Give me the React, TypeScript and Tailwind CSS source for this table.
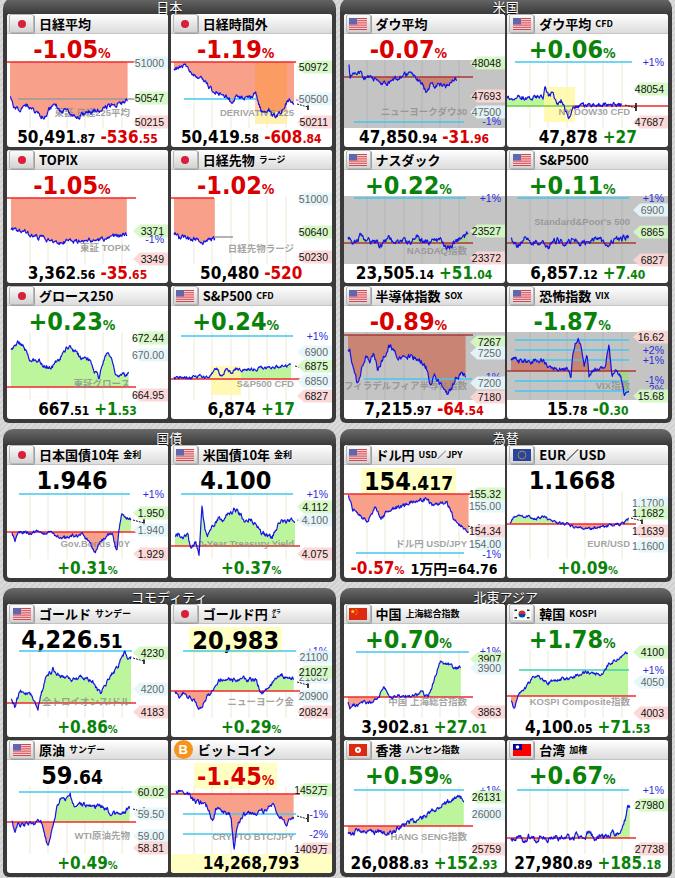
import React from 'react';

const NUM = "font-['DejaVu_Sans_Condensed','DejaVu_Sans','Noto_Sans_CJK_JP',sans-serif] font-bold";
const JP = "font-['Noto_Sans_CJK_JP',sans-serif]";
const LBL = "font-['Liberation_Sans','Noto_Sans_CJK_JP',sans-serif]";

type Lbl = [number, string, 'h' | 'l' | 'g' | 'p' | 'b'];
type HLine = [number, number, number, string];
type Rect = [number, number, number, number, string];

interface ChartDef {
  a: number[][];
  seed: number;
  amp?: number;
  base: number;
  bx?: [number, number];
  lines?: HLine[];
  rects?: Rect[];
  labels: Lbl[];
  wm?: string;
  wy?: number;
  closed?: boolean;
  inv?: boolean;
  tick?: [number, number];
}

interface CardData {
  f: string;
  t: string;
  s?: string;
  top: React.ReactNode;
  bot: React.ReactNode;
  yb?: boolean;
  c: ChartDef;
}

const CYAN = '#40c8f0';
const GREEN = 'text-[#0a820a]';
const LB = { h: '#d4f7c2', l: '#fcd6d6', g: '#e4f6fb', b: '#d4f7c2', p: 'none' };
const LT = { h: '#111', l: '#111', g: '#666', b: '#111', p: '#2b2bdc' };

// deterministic noisy series through anchor points
function gen(a: number[][], seed: number, amp: number) {
  let s = seed * 7919 + 13;
  const rnd = () => {
    s = (s * 9301 + 49297) % 233280;
    return s / 233280;
  };
  const out: number[][] = [];
  let w = 0;
  let j = 0;
  const x1 = a[a.length - 1][0];
  for (let x = a[0][0]; x <= x1 + 0.001; x += 0.6) {
    while (j < a.length - 2 && x > a[j + 1][0]) j++;
    const [ax, ay] = a[j];
    const [bx, by] = a[j + 1];
    const t = Math.min(1, Math.max(0, (x - ax) / (bx - ax || 1)));
    w = w * 0.55 + (rnd() - 0.5) * amp;
    out.push([x, Math.min(67, Math.max(1, ay + (by - ay) * t + w))]);
  }
  return out;
}

function Chart({ c, id }: { c: ChartDef; id: string }) {
  const pts = gen(c.a, c.seed, c.amp ?? 4);
  const line = pts.map((p, i) => `${i ? 'L' : 'M'}${p[0].toFixed(1)},${p[1].toFixed(1)}`).join('');
  const x0 = pts[0][0];
  const xl = pts[pts.length - 1][0];
  const area = `M${x0},${c.base}` + pts.map((p) => `L${p[0].toFixed(1)},${p[1].toFixed(1)}`).join('') + `L${xl},${c.base}Z`;
  const red = c.closed ? '#c98474' : '#f8a08a';
  const green = c.closed ? '#a9d48c' : '#bdf59c';
  const up = c.inv ? red : green;
  const down = c.inv ? green : red;
  const [b1, b2] = c.bx ?? [0, 129];
  return (
    <svg width={161} height={68} className="block shrink-0 overflow-visible">
      <defs>
        <clipPath id={`${id}u`}>
          <rect x={0} y={0} width={161} height={c.base} />
        </clipPath>
        <clipPath id={`${id}d`}>
          <rect x={0} y={c.base} width={161} height={68 - c.base} />
        </clipPath>
      </defs>
      {c.closed && <rect x={0} y={0} width={161} height={68} fill="#c4c4c4" />}
      {[23, 41, 60, 78, 96, 115].map((x) => (
        <line key={x} x1={x} x2={x} y1={0} y2={68} stroke={c.closed ? '#b4b4b4' : '#ece9d6'} strokeWidth={1} />
      ))}
      <path d={area} fill={up} clipPath={`url(#${id}u)`} />
      <path d={area} fill={down} clipPath={`url(#${id}d)`} />
      {c.rects?.map(([x, y, w, h, col], i) => (
        <rect key={i} x={x} y={y} width={w} height={h} fill={col} />
      ))}
      {c.lines?.map(([y, a, b, col], i) => (
        <line key={i} x1={a} x2={b} y1={y} y2={y} stroke={col} strokeWidth={1.3} />
      ))}
      <line x1={b1} x2={b2} y1={c.base} y2={c.base} stroke={c.closed ? '#a83838' : '#f02a2a'} strokeWidth={1.3} />
      {c.wm && (
        <text x={123} y={c.wy ?? 55} textAnchor="end" fill="#8c8c8c" fillOpacity={0.8} className={`${LBL} text-[9.5px] font-bold`}>
          {c.wm}
        </text>
      )}
      <path d={line} fill="none" stroke="#1414e6" strokeWidth={1.2} strokeLinejoin="round" />
      {c.tick && (
        <g stroke="#111">
          <path d={`M${c.tick[0]},${c.tick[1]} L${c.tick[0] + 11},${c.tick[1] + 3}`} strokeWidth={1} strokeDasharray="2 1" />
          <path d={`M${c.tick[0] + 11},${c.tick[1] - 2} V${c.tick[1] + 6}`} strokeWidth={1.6} />
        </g>
      )}
      {c.labels.map(([y, t, k], i) => (
        <g key={i}>
          {k !== 'p' && (
            <polygon
              points={`126,${y} 133,${y - 6.5} 161,${y - 6.5} 161,${y + 6.5} 133,${y + 6.5}`}
              fill={LB[k]}
              fillOpacity={0.92}
            />
          )}
          <text x={157} y={y + 3.7} textAnchor="end" fill={LT[k]} className={`${LBL} text-[10.5px]`}>
            {t}
          </text>
        </g>
      ))}
    </svg>
  );
}

const col = (v: string) => (v.startsWith('-') ? 'text-[#d80000]' : GREEN);

function Pct({ v, big, bg, cc }: { v: string; big?: boolean; bg?: boolean; cc?: string }) {
  return (
    <span className={`${NUM} ${cc ?? col(v)} leading-none whitespace-nowrap ${bg ? 'bg-[#ffffc4] px-[3px] pt-[1px]' : ''}`}>
      <span className={big ? 'text-[25px]' : 'text-[17px]'}>{v}</span>
      <span className={big ? 'text-[14px]' : 'text-[11px]'}>%</span>
    </span>
  );
}

function Val({ i, d, bg }: { i: string; d?: string; bg?: boolean }) {
  return (
    <span className={`${NUM} leading-none text-black whitespace-nowrap ${bg ? 'bg-[#ffffc4] px-[3px] pt-[1px]' : ''}`}>
      <span className="text-[25px]">{i}</span>
      {d && <span className="text-[19px]">{d}</span>}
    </span>
  );
}

function Bot({ i, d, c, cd, cc }: { i: string; d?: string; c: string; cd?: string; cc?: string }) {
  return (
    <span className={`${NUM} leading-none text-black whitespace-nowrap`}>
      <span className="text-[17px]">{i}</span>
      {d && <span className="text-[12px]">{d}</span>}
      <span className={`ml-[5px] ${cc ?? col(c)}`}>
        <span className="text-[17px]">{c}</span>
        {cd && <span className="text-[12px]">{cd}</span>}
      </span>
    </span>
  );
}

function star(cx: number, cy: number, r: number) {
  const p: string[] = [];
  for (let k = 0; k < 10; k++) {
    const rr = k % 2 ? r * 0.42 : r;
    const an = -Math.PI / 2 + (k * Math.PI) / 5;
    p.push(`${(cx + rr * Math.cos(an)).toFixed(2)},${(cy + rr * Math.sin(an)).toFixed(2)}`);
  }
  return p.join(' ');
}

function Flag({ f }: { f: string }) {
  if (f === 'btc')
    return (
      <div className="ml-[3px] flex h-[19px] w-[19px] shrink-0 items-center justify-center rounded-full bg-[#f7931a] font-['Liberation_Sans',sans-serif] text-[13px] font-bold leading-none text-white">
        B
      </div>
    );
  return (
    <div className="ml-[2px] flex h-[19px] w-[25px] shrink-0 items-center justify-center rounded-[2px] border border-[#b8b8b8] bg-linear-to-b from-[#fbfbfb] to-[#d2d2d2] shadow-[1px_1px_0_#a0a0a0]">
      <svg width={18} height={12} viewBox="0 0 18 12">
        {f === 'jp' && <circle cx={9} cy={6} r={4} fill="#d8203a" />}
        {f === 'us' && (
          <g>
            <rect width={18} height={12} fill="#f4f4f4" />
            {[0, 2, 4, 6, 8, 10, 12].map((k) => (
              <rect key={k} y={(k * 12) / 13} width={18} height={12 / 13} fill="#d8353c" />
            ))}
            <rect width={8} height={6.5} fill="#6266ae" />
          </g>
        )}
        {f === 'eu' && (
          <g>
            <rect width={18} height={12} fill="#2a449c" />
            {Array.from({ length: 12 }).map((_, k) => (
              <circle key={k} cx={9 + 3.8 * Math.cos((k * Math.PI) / 6)} cy={6 + 3.8 * Math.sin((k * Math.PI) / 6)} r={0.6} fill="#f0d020" />
            ))}
          </g>
        )}
        {f === 'cn' && (
          <g>
            <rect width={18} height={12} fill="#de2910" />
            <polygon points={star(3.8, 3.6, 2.4)} fill="#ffde00" />
            <circle cx={7} cy={1.6} r={0.5} fill="#ffde00" />
            <circle cx={8} cy={3} r={0.5} fill="#ffde00" />
            <circle cx={8} cy={5} r={0.5} fill="#ffde00" />
            <circle cx={7} cy={6.4} r={0.5} fill="#ffde00" />
          </g>
        )}
        {f === 'kr' && (
          <g>
            <rect width={18} height={12} fill="#fafafa" />
            <path d="M5.5,6 A3.5,3.5 0 0 1 12.5,6 Z" fill="#cd2e3a" />
            <path d="M5.5,6 A3.5,3.5 0 0 0 12.5,6 Z" fill="#0047a0" />
            <rect x={1.5} y={1.5} width={2.5} height={1.5} fill="#222" />
            <rect x={14} y={1.5} width={2.5} height={1.5} fill="#222" />
            <rect x={1.5} y={9} width={2.5} height={1.5} fill="#222" />
            <rect x={14} y={9} width={2.5} height={1.5} fill="#222" />
          </g>
        )}
        {f === 'hk' && (
          <g>
            <rect width={18} height={12} fill="#de2910" />
            <circle cx={9} cy={6} r={3} fill="#fff" />
            <circle cx={9} cy={6} r={1} fill="#de2910" />
          </g>
        )}
        {f === 'tw' && (
          <g>
            <rect width={18} height={12} fill="#fe0000" />
            <rect width={9} height={6} fill="#000095" />
            <circle cx={4.5} cy={3} r={1.8} fill="#fff" />
          </g>
        )}
      </svg>
    </div>
  );
}

function Card({ d, id }: { d: CardData; id: string }) {
  return (
    <div className="flex h-[133px] w-[161px] flex-col overflow-hidden rounded-[3px] bg-white">
      <div className="flex h-[20px] shrink-0 items-center border-b border-[#c4c4c4] bg-linear-to-b from-white to-[#dcdcdc]">
        <Flag f={d.f} />
        <span className={`${JP} ml-[5px] whitespace-nowrap text-[13px] font-bold leading-none text-black`}>{d.t}</span>
        {d.s && <span className={`${JP} ml-[4px] whitespace-nowrap text-[9px] font-bold leading-none text-black`}>{d.s}</span>}
      </div>
      <div className="flex h-[26px] w-[130px] shrink-0 items-start justify-center pt-[3px]">{d.top}</div>
      <Chart c={d.c} id={id} />
      <div className={`flex h-[19px] shrink-0 items-start justify-center pt-[1px] ${d.yb ? 'bg-[#ffffc4]' : ''}`}>{d.bot}</div>
    </div>
  );
}

function Section({ title, cards, k }: { title: string; cards: CardData[]; k: string }) {
  return (
    <div className="w-[333px] rounded-t-[10px] rounded-b-[6px] bg-[linear-gradient(#6a6a6a,#3a3a3a_16px)] px-[4px] pb-[4px]">
      <div className={`${JP} flex h-[16px] items-center justify-center text-[13px] leading-none text-white [text-shadow:0_1px_1px_#000]`}>
        {title}
      </div>
      <div className="grid grid-cols-2 gap-[3px]">
        {cards.map((d, i) => (
          <Card key={i} d={d} id={`${k}${i}`} />
        ))}
      </div>
    </div>
  );
}

const japan: CardData[] = [
  {
    f: 'jp', t: '日経平均', top: <Pct v="-1.05" big />, bot: <Bot i="50,491" d=".87" c="-536" cd=".55" />,
    c: {
      a: [[3, 37], [8, 48], [13, 50], [20, 45], [28, 52], [36, 57], [42, 50], [48, 43], [53, 50], [60, 52], [71, 57], [80, 52], [90, 50], [100, 47], [110, 44], [121, 40]],
      seed: 1, base: 2, lines: [[39, 11, 129, '#9a9a9a']],
      labels: [[3, '51000', 'g'], [38, '50547', 'h'], [62, '50215', 'l']], wm: '東証 日経225平均', wy: 56,
    },
  },
  {
    f: 'jp', t: '日経時間外', top: <Pct v="-1.19" big />, bot: <Bot i="50,419" d=".58" c="-608" cd=".84" />,
    c: {
      a: [[3, 10], [8, 8], [15, 5], [19, 12], [28, 18], [35, 22], [41, 30], [50, 33], [58, 38], [61, 45], [65, 36], [75, 38], [81, 37], [85, 32], [88, 45], [91, 53], [98, 50], [105, 58], [111, 50], [118, 40], [123, 45]],
      seed: 2, base: 2, bx: [0, 125],
      rects: [[84, 2, 32, 50, 'rgba(255,150,50,0.45)'], [84, 52, 32, 12, 'rgba(255,238,150,0.75)']],
      lines: [[39, 13, 85, CYAN], [40, 125, 161, '#f060f0']], tick: [126, 44],
      labels: [[7, '50972', 'h'], [39, '50500', 'g'], [62, '50211', 'l']], wm: 'DERIVATIVE 225', wy: 56,
    },
  },
  {
    f: 'jp', t: 'TOPIX', top: <Pct v="-1.05" big />, bot: <Bot i="3,362" d=".56" c="-35" cd=".65" />,
    c: {
      a: [[4, 32], [10, 36], [18, 35], [25, 40], [35, 42], [45, 46], [55, 47], [62, 44], [70, 46], [80, 45], [90, 44], [100, 42], [110, 40], [120, 38]],
      seed: 3, base: 2,
      labels: [[35, '3371', 'h'], [43, '-1%', 'p'], [63, '3349', 'l']], wm: '東証 TOPIX', wy: 55,
    },
  },
  {
    f: 'jp', t: '日経先物', s: 'ラージ', top: <Pct v="-1.02" big />, bot: <Bot i="50,480" c="-520" />,
    c: {
      a: [[3, 36], [8, 42], [14, 40], [20, 44], [26, 42], [32, 46], [38, 43], [44, 44]],
      seed: 4, base: 2, bx: [0, 43], lines: [[41, 44, 62, '#9a9a9a']],
      labels: [[3, '51000', 'g'], [36, '50640', 'h'], [61, '50230', 'l']], wm: '日経先物ラージ', wy: 56,
    },
  },
  {
    f: 'jp', t: 'グロース250', top: <Pct v="+0.23" big />, bot: <Bot i="667" d=".51" c="+1" cd=".53" />,
    c: {
      a: [[4, 18], [8, 12], [12, 10], [17, 14], [22, 26], [27, 30], [32, 28], [38, 34], [44, 36], [50, 30], [56, 22], [60, 15], [66, 18], [72, 24], [78, 28], [84, 30], [88, 40], [92, 46], [96, 30], [100, 20], [104, 26], [108, 40], [112, 46], [116, 44], [122, 42]],
      seed: 5, base: 55,
      labels: [[6, '672.44', 'h'], [23, '670.00', 'g'], [63, '664.95', 'l']], wm: '東証グロース', wy: 55,
    },
  },
  {
    f: 'us', t: 'S&P500', s: 'CFD', top: <Pct v="+0.24" big />, bot: <Bot i="6,874" c="+17" />,
    c: {
      a: [[3, 46], [10, 45], [20, 46], [30, 44], [38, 46], [42, 40], [46, 36], [50, 44], [55, 38], [60, 40], [66, 36], [72, 38], [80, 37], [90, 36], [100, 36], [110, 35], [120, 34]],
      seed: 6, amp: 3, base: 47, rects: [[40, 34, 30, 29, 'rgba(255,248,160,0.8)']],
      lines: [[4, 10, 122, CYAN]], tick: [124, 34],
      labels: [[4, '+1%', 'p'], [20, '6900', 'g'], [34, '6875', 'b'], [49, '6850', 'g'], [64, '6827', 'l']], wm: 'S&P500 CFD', wy: 55,
    },
  },
];

const us: CardData[] = [
  {
    f: 'us', t: 'ダウ平均', top: <Pct v="-0.07" big />, bot: <Bot i="47,850" d=".94" c="-31" cd=".96" />,
    c: {
      a: [[5, 3], [6, 18], [10, 14], [16, 13], [20, 18], [26, 16], [35, 22], [43, 25], [50, 20], [58, 16], [65, 13], [70, 16], [73, 18], [78, 24], [82, 33], [86, 26], [95, 25], [101, 28], [108, 20], [113, 18]],
      seed: 7, base: 17, closed: true, lines: [[62, 10, 120, CYAN]],
      labels: [[3, '48048', 'h'], [36, '47693', 'l'], [52, '47500', 'g'], [61, '-1%', 'p']], wm: 'ニューヨークダウ30', wy: 55,
    },
  },
  {
    f: 'us', t: 'ダウ平均', s: 'CFD', top: <Pct v="+0.06" big />, bot: <Bot i="47,878" c="+27" />,
    c: {
      a: [[0, 38], [10, 37], [20, 38], [30, 37], [36, 38], [38, 27], [42, 36], [46, 33], [50, 45], [54, 40], [58, 50], [62, 60], [64, 52], [67, 47], [75, 46], [85, 45], [95, 44], [105, 45], [115, 45]],
      seed: 8, base: 46, bx: [66, 161], rects: [[37, 27, 31, 35, 'rgba(255,248,160,0.8)']],
      lines: [[2, 8, 125, CYAN], [46, 0, 66, '#66cc44']], tick: [118, 45],
      labels: [[2, '+1%', 'p'], [29, '48054', 'h'], [62, '47687', 'l']], wm: 'NY DOW30 CFD', wy: 55,
    },
  },
  {
    f: 'us', t: 'ナスダック', top: <Pct v="+0.22" big />, bot: <Bot i="23,505" d=".14" c="+51" cd=".04" />,
    c: {
      a: [[4, 42], [10, 48], [16, 40], [22, 46], [30, 44], [38, 50], [45, 42], [52, 46], [60, 44], [66, 48], [72, 40], [78, 45], [85, 47], [92, 42], [100, 48], [106, 52], [112, 45], [118, 42], [124, 38]],
      seed: 9, amp: 5, base: 47, closed: true, lines: [[2, 10, 122, CYAN]],
      labels: [[2, '+1%', 'p'], [35, '23527', 'h'], [62, '23372', 'l']], wm: 'NASDAQ指数', wy: 58,
    },
  },
  {
    f: 'us', t: 'S&P500', top: <Pct v="+0.11" big />, bot: <Bot i="6,857" d=".12" c="+7" cd=".40" />,
    c: {
      a: [[4, 44], [10, 50], [18, 42], [26, 47], [34, 45], [42, 50], [50, 44], [58, 47], [66, 43], [74, 48], [82, 46], [90, 42], [98, 48], [106, 46], [114, 42], [122, 40]],
      seed: 10, amp: 5, base: 47, closed: true, lines: [[2, 10, 122, CYAN]],
      labels: [[2, '+1%', 'p'], [14, '6900', 'g'], [36, '6865', 'h'], [64, '6827', 'l']], wm: "Standard&Poor's 500", wy: 29,
    },
  },
  {
    f: 'us', t: '半導体指数', s: 'SOX', top: <Pct v="-0.89" big />, bot: <Bot i="7,215" d=".97" c="-64" cd=".54" />,
    c: {
      a: [[4, 16], [6, 18], [10, 40], [13, 51], [18, 35], [22, 25], [26, 30], [30, 21], [34, 38], [40, 25], [45, 13], [50, 20], [58, 26], [66, 24], [75, 28], [82, 35], [86, 55], [90, 45], [94, 48], [100, 58], [104, 63], [108, 55], [112, 45], [118, 43], [122, 43]],
      seed: 11, amp: 5, base: 3, closed: true, lines: [[47, 20, 128, CYAN]],
      labels: [[10, '7267', 'h'], [21, '7250', 'g'], [45, '-1%', 'p'], [51, '7200', 'g'], [65, '7180', 'l']], wm: 'フィラデルフィア半導体指数', wy: 57,
    },
  },
  {
    f: 'us', t: '恐怖指数', s: 'VIX', top: <Pct v="-1.87" big cc={GREEN} />,
    bot: <Bot i="15" d=".78" c="-0" cd=".30" cc={GREEN} />,
    c: {
      a: [[4, 28], [8, 24], [12, 30], [18, 28], [24, 30], [30, 27], [36, 29], [42, 34], [50, 36], [58, 37], [62, 38], [64, 46], [66, 20], [68, 11], [71, 6], [74, 15], [77, 35], [80, 20], [82, 45], [86, 38], [92, 38], [98, 36], [102, 11], [105, 43], [110, 38], [114, 45], [117, 63], [122, 58]],
      seed: 12, base: 39, closed: true, inv: true,
      lines: [[8, 8, 122, CYAN], [18, 8, 122, CYAN], [28, 8, 122, CYAN], [49, 8, 122, CYAN], [59, 8, 122, CYAN]],
      labels: [[5, '16.62', 'l'], [18, '+2%', 'p'], [28, '+1%', 'p'], [48, '-1%', 'p'], [57, '-2%', 'p'], [64, '15.68', 'h']], wm: 'VIX指数', wy: 57,
    },
  },
];

const bonds: CardData[] = [
  {
    f: 'jp', t: '日本国債10年', s: '金利', top: <Val i="1.946" />, bot: <Pct v="+0.31" />,
    c: {
      a: [[5, 42], [8, 49], [11, 44], [14, 41], [20, 42], [30, 41], [40, 42], [50, 44], [56, 48], [65, 45], [75, 44], [82, 50], [88, 62], [92, 52], [100, 45], [105, 42], [108, 54], [110, 57], [112, 39], [115, 22], [118, 27], [121, 26], [124, 29]],
      seed: 13, amp: 3, base: 41, lines: [[3, 12, 123, CYAN]], tick: [126, 29],
      labels: [[3, '+1%', 'p'], [22, '1.950', 'h'], [39, '1.940', 'g'], [63, '1.929', 'l']], wm: 'Gov.Bonds 10Y', wy: 56,
    },
  },
  {
    f: 'us', t: '米国債10年', s: '金利', top: <Val i="4.100" />, bot: <Pct v="+0.37" />,
    c: {
      a: [[4, 47], [8, 42], [12, 48], [17, 44], [20, 60], [24, 52], [28, 62], [31, 16], [34, 40], [36, 47], [40, 38], [44, 32], [48, 26], [52, 30], [56, 24], [61, 21], [64, 17], [68, 23], [73, 29], [80, 28], [86, 34], [91, 42], [96, 44], [101, 46], [106, 36], [110, 29], [115, 32], [120, 30], [124, 29]],
      seed: 14, base: 55, lines: [[3, 10, 122, CYAN]], tick: [126, 29],
      labels: [[3, '+1%', 'p'], [16, '4.112', 'h'], [29, '4.100', 'g'], [63, '4.075', 'l']], wm: '10-Year Treasury Yield', wy: 56,
    },
  },
];

const fx: CardData[] = [
  {
    f: 'us', t: 'ドル円', s: 'USD／JPY', top: <Val i="154" d=".417" bg />,
    bot: (
      <span className="flex items-start leading-none">
        <Pct v="-0.57" />
        <span className={`${NUM} ml-[6px] pt-[2px] text-[14px] text-black`}>1万円=64.76</span>
      </span>
    ),
    c: {
      a: [[4, 4], [6, 10], [9, 19], [14, 22], [18, 26], [22, 31], [27, 24], [32, 16], [37, 29], [42, 22], [48, 17], [56, 16], [65, 11], [74, 10], [83, 8], [88, 14], [95, 12], [103, 12], [107, 20], [110, 29], [116, 34], [122, 39], [125, 40]],
      seed: 15, amp: 3.5, base: 3, lines: [[62, 12, 120, CYAN]], tick: [124, 35],
      labels: [[3, '155.32', 'h'], [15, '155.00', 'g'], [40, '154.34', 'l'], [53, '154.00', 'g'], [63, '-1%', 'p']], wm: 'ドル円 USD/JPY', wy: 56,
    },
  },
  {
    f: 'eu', t: 'EUR／USD', top: <Val i="1.1668" />, bot: <Pct v="+0.09" />,
    c: {
      a: [[3, 32], [6, 28], [9, 25], [13, 24], [16, 26], [20, 24], [25, 28], [30, 27], [37, 25], [42, 29], [48, 31], [55, 33], [60, 33], [66, 35], [72, 37], [79, 38], [86, 37], [93, 36], [100, 35], [108, 34], [114, 33], [117, 32], [122, 27]],
      seed: 16, amp: 2.5, base: 33, tick: [124, 27],
      labels: [[12, '1.1700', 'g'], [22, '1.1682', 'h'], [40, '1.1639', 'l'], [55, '1.1600', 'g']], wm: 'EUR/USD', wy: 56,
    },
  },
];

const com: CardData[] = [
  {
    f: 'us', t: 'ゴールド', s: 'サンデー', top: <Val i="4,226" d=".51" />, bot: <Pct v="+0.86" />,
    c: {
      a: [[4, 50], [8, 57], [13, 40], [18, 42], [23, 45], [26, 48], [31, 57], [34, 45], [38, 31], [42, 24], [46, 19], [50, 25], [55, 25], [60, 28], [63, 30], [70, 28], [77, 27], [83, 30], [86, 32], [90, 38], [93, 44], [97, 36], [101, 30], [106, 23], [112, 14], [118, 3], [121, 10], [124, 6]],
      seed: 17, base: 53, lines: [[1, 12, 125, CYAN]], tick: [126, 8],
      labels: [[3, '4230', 'h'], [39, '4200', 'g'], [62, '4183', 'l']], wm: '金トロイオンス/ドル', wy: 55,
    },
  },
  {
    f: 'jp', t: 'ゴールド円', s: '㌘', top: <Val i="20,983" bg />, bot: <Pct v="+0.29" />,
    c: {
      a: [[4, 40], [8, 47], [13, 43], [18, 46], [24, 52], [28, 58], [32, 54], [35, 50], [41, 40], [45, 34], [48, 30], [55, 28], [62, 30], [70, 28], [78, 30], [85, 28], [88, 38], [91, 45], [95, 38], [100, 34], [105, 30], [111, 25], [116, 29], [120, 26], [123, 30]],
      seed: 18, base: 41, lines: [[1, 12, 125, CYAN]], tick: [126, 32],
      labels: [[1, '+1%', 'p'], [7, '21100', 'g'], [27, '21000', 'g'], [22, '21027', 'h'], [46, '20900', 'g'], [62, '20824', 'l']], wm: 'ニューヨーク金', wy: 55,
    },
  },
  {
    f: 'us', t: '原油', s: 'サンデー', top: <Val i="59" d=".64" />, bot: <Pct v="+0.49" />,
    c: {
      a: [[5, 34], [8, 46], [12, 38], [15, 40], [20, 37], [25, 39], [30, 36], [34, 35], [38, 50], [41, 62], [45, 45], [50, 22], [54, 10], [58, 15], [63, 9], [68, 22], [72, 18], [80, 19], [86, 22], [92, 20], [100, 23], [104, 29], [110, 28], [115, 29], [120, 24], [123, 23]],
      seed: 19, base: 36, lines: [[6, 12, 125, CYAN]], tick: [126, 23],
      labels: [[6, '60.02', 'h'], [28, '59.50', 'g'], [50, '59.00', 'g'], [62, '58.81', 'l']], wm: 'WTI原油先物', wy: 53,
    },
  },
  {
    f: 'btc', t: 'ビットコイン', top: <Pct v="-1.45" big bg />, yb: true,
    bot: <span className={`${NUM} text-[17px] leading-none text-black`}>14,268,793</span>,
    c: {
      a: [[5, 5], [9, 7], [12, 4], [15, 7], [19, 10], [22, 14], [27, 16], [32, 18], [37, 22], [40, 30], [42, 35], [45, 22], [50, 25], [56, 28], [60, 30], [63, 62], [66, 40], [68, 35], [73, 28], [80, 27], [88, 26], [95, 24], [101, 17], [104, 22], [106, 27], [110, 32], [115, 38], [119, 34], [123, 30]],
      seed: 20, base: 8, lines: [[28, 12, 125, CYAN], [48, 12, 125, CYAN]], tick: [126, 30],
      labels: [[4, '1452万', 'h'], [28, '-1%', 'p'], [48, '-2%', 'p'], [63, '1409万', 'l']], wm: 'CRYPTO BTC/JPY', wy: 54,
    },
  },
];

const asia: CardData[] = [
  {
    f: 'cn', t: '中国', s: '上海総合指数', top: <Pct v="+0.70" big />, bot: <Bot i="3,902" d=".81" c="+27" cd=".01" />,
    c: {
      a: [[4, 53], [6, 58], [9, 54], [14, 56], [20, 52], [26, 52], [30, 50], [35, 46], [38, 40], [40, 37], [43, 43], [46, 46], [55, 46], [65, 46], [75, 45], [77, 40], [80, 44], [84, 47], [87, 40], [90, 30], [94, 18], [97, 10], [100, 14], [104, 13], [108, 16], [112, 18], [117, 17]],
      seed: 21, amp: 3, base: 47, lines: [[2, 12, 125, CYAN]],
      labels: [[1, '+1%', 'p'], [9, '3907', 'h'], [18, '3900', 'g'], [62, '3863', 'l']], wm: '中国 上海総合指数', wy: 55,
    },
  },
  {
    f: 'kr', t: '韓国', s: 'KOSPI', top: <Pct v="+1.78" big />, bot: <Bot i="4,100" d=".05" c="+71" cd=".53" />,
    c: {
      a: [[4, 50], [6, 56], [8, 58], [10, 50], [13, 43], [17, 40], [22, 33], [27, 25], [32, 27], [36, 30], [41, 33], [48, 30], [55, 29], [62, 28], [68, 26], [74, 23], [82, 22], [90, 23], [95, 24], [101, 15], [106, 12], [111, 8], [116, 6], [121, 2]],
      seed: 22, amp: 3, base: 46, lines: [[20, 12, 122, '#40d0b0']],
      labels: [[2, '4100', 'h'], [20, '+1%', 'p'], [32, '4050', 'g'], [63, '4003', 'l']], wm: 'KOSPI Composite指数', wy: 55,
    },
  },
  {
    f: 'hk', t: '香港', s: 'ハンセン指数', top: <Pct v="+0.59" big />, bot: <Bot i="26,088" d=".83" c="+152" cd=".93" />,
    c: {
      a: [[4, 46], [8, 50], [12, 44], [18, 48], [24, 44], [30, 47], [36, 45], [42, 48], [48, 46], [52, 44], [58, 40], [64, 36], [70, 35], [76, 32], [82, 30], [88, 25], [94, 22], [100, 17], [106, 14], [112, 13], [116, 11], [120, 14]],
      seed: 23, base: 40, lines: [[4, 10, 120, CYAN]],
      labels: [[4, '+1%', 'p'], [11, '26131', 'h'], [28, '26000', 'g'], [63, '25759', 'l']], wm: 'HANG SENG指数', wy: 54,
    },
  },
  {
    f: 'tw', t: '台湾', s: '加権', top: <Pct v="+0.67" big />, bot: <Bot i="27,980" d=".89" c="+185" cd=".18" />,
    c: {
      a: [[4, 55], [10, 50], [16, 56], [22, 50], [28, 54], [34, 49], [40, 55], [46, 50], [52, 53], [58, 48], [64, 54], [70, 50], [76, 52], [82, 47], [88, 53], [94, 48], [100, 52], [106, 46], [112, 50], [116, 40], [119, 30], [121, 20], [123, 19]],
      seed: 24, amp: 5, base: 52, lines: [[4, 10, 122, CYAN]],
      labels: [[4, '+1%', 'p'], [19, '27980', 'h'], [63, '27738', 'l']],
    },
  },
];

export default function App() {
  return (
    <div className="min-h-[878px] w-[675px] overflow-hidden bg-[repeating-linear-gradient(135deg,#d0d0d0_0px,#d0d0d0_2px,#dbdbdb_2px,#dbdbdb_4px)] px-[3px]">
      <div className="-mt-[2px] flex gap-[4px]">
        <Section title="日本" cards={japan} k="jp" />
        <Section title="米国" cards={us} k="us" />
      </div>
      <div className="mt-[6px] flex gap-[4px]">
        <Section title="国債" cards={bonds} k="bd" />
        <Section title="為替" cards={fx} k="fx" />
      </div>
      <div className="mt-[6px] flex gap-[4px]">
        <Section title="コモディティ" cards={com} k="cm" />
        <Section title="北東アジア" cards={asia} k="as" />
      </div>
    </div>
  );
}
